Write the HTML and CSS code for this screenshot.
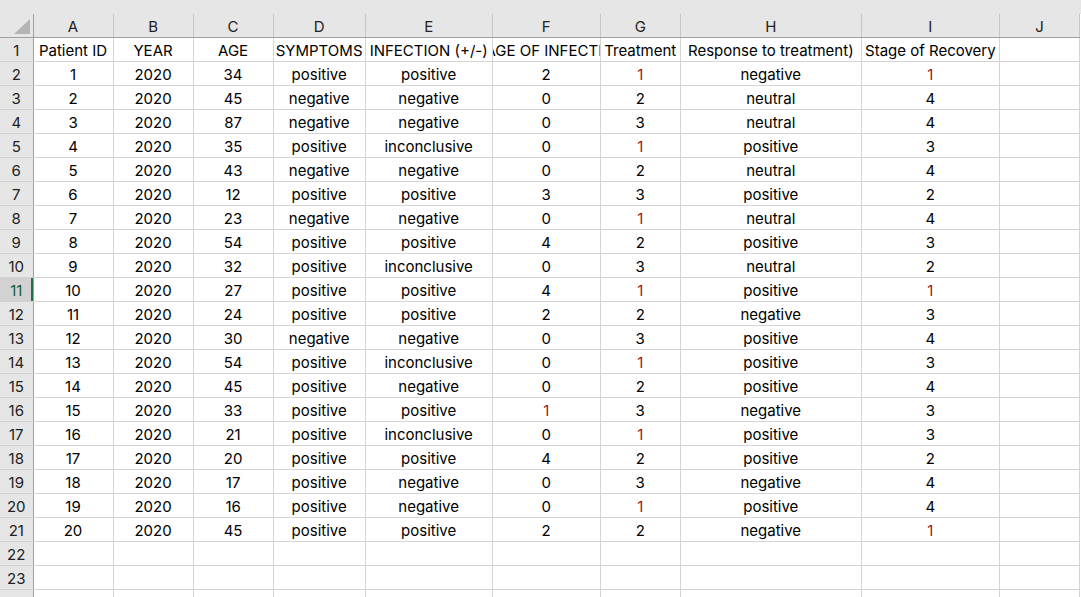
FILE: index.html
```html
<!DOCTYPE html>
<html lang="en">
<head>
    <meta charset="UTF-8">
    <meta name="viewport" content="width=device-width, initial-scale=1.0">
    <title>Patient data</title>
    <link rel="stylesheet" href="styles.css">
</head>
<body>
    <div class="sheet-top"></div>
    <table class="sheet">
        <colgroup>
            <col class="col-hdr">
            <col class="w80"><col class="w80"><col class="w80">
            <col class="w92"><col class="w127"><col class="w108">
            <col class="w80"><col class="w181"><col class="w138"><col class="w80">
        </colgroup>
        <thead>
            <tr>
                <th class="corner"><span class="corner-mark"></span></th>
                <th>A</th><th>B</th><th>C</th><th>D</th><th>E</th>
                <th>F</th><th>G</th><th>H</th><th>I</th><th>J</th>
            </tr>
        </thead>
        <tbody>
            <tr><th>1</th><td>Patient ID</td><td>YEAR</td><td>AGE</td><td>SYMPTOMS</td><td>INFECTION (+/-)</td><td><div class="fit">STAGE OF INFECTION</div></td><td>Treatment</td><td>Response to treatment)</td><td>Stage of Recovery</td><td></td></tr>
            <tr><th>2</th><td>1</td><td>2020</td><td>34</td><td>positive</td><td>positive</td><td>2</td><td class="one">1</td><td>negative</td><td class="one">1</td><td></td></tr>
            <tr><th>3</th><td>2</td><td>2020</td><td>45</td><td>negative</td><td>negative</td><td>0</td><td>2</td><td>neutral</td><td>4</td><td></td></tr>
            <tr><th>4</th><td>3</td><td>2020</td><td>87</td><td>negative</td><td>negative</td><td>0</td><td>3</td><td>neutral</td><td>4</td><td></td></tr>
            <tr><th>5</th><td>4</td><td>2020</td><td>35</td><td>positive</td><td>inconclusive</td><td>0</td><td class="one">1</td><td>positive</td><td>3</td><td></td></tr>
            <tr><th>6</th><td>5</td><td>2020</td><td>43</td><td>negative</td><td>negative</td><td>0</td><td>2</td><td>neutral</td><td>4</td><td></td></tr>
            <tr><th>7</th><td>6</td><td>2020</td><td>12</td><td>positive</td><td>positive</td><td>3</td><td>3</td><td>positive</td><td>2</td><td></td></tr>
            <tr><th>8</th><td>7</td><td>2020</td><td>23</td><td>negative</td><td>negative</td><td>0</td><td class="one">1</td><td>neutral</td><td>4</td><td></td></tr>
            <tr><th>9</th><td>8</td><td>2020</td><td>54</td><td>positive</td><td>positive</td><td>4</td><td>2</td><td>positive</td><td>3</td><td></td></tr>
            <tr><th>10</th><td>9</td><td>2020</td><td>32</td><td>positive</td><td>inconclusive</td><td>0</td><td>3</td><td>neutral</td><td>2</td><td></td></tr>
            <tr><th class="selected">11</th><td>10</td><td>2020</td><td>27</td><td>positive</td><td>positive</td><td>4</td><td class="one">1</td><td>positive</td><td class="one">1</td><td></td></tr>
            <tr><th>12</th><td>11</td><td>2020</td><td>24</td><td>positive</td><td>positive</td><td>2</td><td>2</td><td>negative</td><td>3</td><td></td></tr>
            <tr><th>13</th><td>12</td><td>2020</td><td>30</td><td>negative</td><td>negative</td><td>0</td><td>3</td><td>positive</td><td>4</td><td></td></tr>
            <tr><th>14</th><td>13</td><td>2020</td><td>54</td><td>positive</td><td>inconclusive</td><td>0</td><td class="one">1</td><td>positive</td><td>3</td><td></td></tr>
            <tr><th>15</th><td>14</td><td>2020</td><td>45</td><td>positive</td><td>negative</td><td>0</td><td>2</td><td>positive</td><td>4</td><td></td></tr>
            <tr><th>16</th><td>15</td><td>2020</td><td>33</td><td>positive</td><td>positive</td><td class="one">1</td><td>3</td><td>negative</td><td>3</td><td></td></tr>
            <tr><th>17</th><td>16</td><td>2020</td><td>21</td><td>positive</td><td>inconclusive</td><td>0</td><td class="one">1</td><td>positive</td><td>3</td><td></td></tr>
            <tr><th>18</th><td>17</td><td>2020</td><td>20</td><td>positive</td><td>positive</td><td>4</td><td>2</td><td>positive</td><td>2</td><td></td></tr>
            <tr><th>19</th><td>18</td><td>2020</td><td>17</td><td>positive</td><td>negative</td><td>0</td><td>3</td><td>negative</td><td>4</td><td></td></tr>
            <tr><th>20</th><td>19</td><td>2020</td><td>16</td><td>positive</td><td>negative</td><td>0</td><td class="one">1</td><td>positive</td><td>4</td><td></td></tr>
            <tr><th>21</th><td>20</td><td>2020</td><td>45</td><td>positive</td><td>positive</td><td>2</td><td>2</td><td>negative</td><td class="one">1</td><td></td></tr>
            <tr><th>22</th><td></td><td></td><td></td><td></td><td></td><td></td><td></td><td></td><td></td><td></td></tr>
            <tr><th>23</th><td></td><td></td><td></td><td></td><td></td><td></td><td></td><td></td><td></td><td></td></tr>
            <tr><th>24</th><td></td><td></td><td></td><td></td><td></td><td></td><td></td><td></td><td></td><td></td></tr>
        </tbody>
    </table>
</body>
</html>
```

FILE: styles.css
```css
* {
    margin: 0;
    padding: 0;
    box-sizing: border-box;
}

body {
    font-family: 'Inter', 'Liberation Sans', sans-serif;
    font-size: 15px;
    color: #000;
    background: #fff;
    overflow: hidden;
}

.sheet-top {
    height: 14px;
    background: #e6e6e6;
}

.sheet {
    border-collapse: collapse;
    table-layout: fixed;
    width: 1080px;
}

.col-hdr { width: 33px; }
.w80 { width: 80px; }
.w92 { width: 92px; }
.w108 { width: 108px; }
.w127 { width: 127px; }
.w138 { width: 138px; }
.w181 { width: 181px; }

.sheet tr {
    height: 24px;
}

.sheet thead tr {
    height: 23px;
}

.sheet td,
.sheet th {
    border: 1px solid #d4d4d4;
    text-align: center;
    vertical-align: middle;
    white-space: nowrap;
    overflow: hidden;
    font-weight: normal;
    padding: 2px 0 0;
    line-height: 21px;
}

.sheet td {
    border-top: none;
}

.sheet thead th {
    background: #e6e6e6;
    color: #222;
    border-top: none;
    border-left-color: #c6c6c6;
    border-right-color: #c6c6c6;
    border-bottom: 1px solid #a0a0a0;
}

.sheet tbody th {
    background: #e6e6e6;
    color: #222;
    border-left: none;
    border-top: none;
    border-bottom-color: #d0d0d0;
    border-right: 1px solid #a0a0a0;
}

.sheet thead th.corner {
    border-left: none;
    border-right-color: #a0a0a0;
    position: relative;
}

.corner-mark {
    position: absolute;
    right: 3px;
    bottom: 3px;
    width: 0;
    height: 0;
    border-left: 16px solid transparent;
    border-bottom: 15px solid #b4b4b4;
}

.sheet tbody th.selected {
    background: #d2d2d2;
    color: #185c37;
    box-shadow: inset -2px 0 0 #217346;
}

.fit {
    display: flex;
    justify-content: center;
    overflow: hidden;
}

.one {
    color: #a01818;
}
```
